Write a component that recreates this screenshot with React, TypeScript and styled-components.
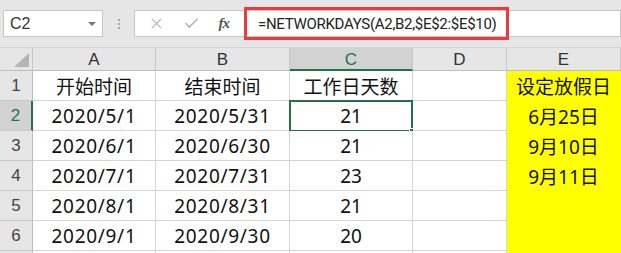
import styled, { createGlobalStyle } from 'styled-components';
import { X, Check } from 'lucide-react';

const GlobalStyle = createGlobalStyle`
  html, body {
    margin: 0;
    padding: 0;
    background: #ffffff;
    overflow: hidden;
  }
`;

const GREEN = '#217346';

const StRoot = styled.div`
  width: 621px;
  height: 253px;
  overflow: hidden;
  font-family: 'Liberation Sans', Arial, sans-serif;
`;

const StFormulaBar = styled.div`
  display: flex;
  align-items: center;
  height: 47px;
  background: #e6e6e6;
  box-sizing: border-box;
  padding-left: 3px;
`;

const StNameBox = styled.div`
  width: 100px;
  height: 27px;
  box-sizing: border-box;
  background: #fff;
  border: 1px solid #c6c6c6;
  display: flex;
  align-items: center;
  justify-content: space-between;
  padding: 0 6px 0 6px;
  font-size: 16px;
  color: #333;
`;

const StCaret = styled.span`
  width: 0;
  height: 0;
  border-left: 4px solid transparent;
  border-right: 4px solid transparent;
  border-top: 4px solid #777;
`;

const StGrip = styled.div`
  width: 31px;
  display: flex;
  flex-direction: column;
  align-items: center;
  gap: 2px;

  span {
    width: 2px;
    height: 2px;
    background: #a8a8a8;
  }
`;

const StButtons = styled.div`
  width: 110px;
  height: 27px;
  box-sizing: border-box;
  background: #fff;
  border: 1px solid #c6c6c6;
  border-right: none;
  display: flex;
  align-items: center;
  justify-content: space-around;
  padding: 0 6px 0 4px;
  color: #b8b8b8;
`;

const StFx = styled.span`
  font-family: 'Liberation Serif', 'Times New Roman', serif;
  font-style: italic;
  font-weight: bold;
  font-size: 15px;
  color: #555;
  letter-spacing: -1px;
`;

const StInput = styled.div`
  flex: 1;
  height: 27px;
  box-sizing: border-box;
  background: #fff;
  border: 1px solid #c6c6c6;
  position: relative;
  display: flex;
  align-items: center;
  padding-left: 13px;
  font-family: Roboto, 'Liberation Sans', sans-serif;
  font-size: 15px;
  color: #222;
  letter-spacing: -0.3px;
`;

const StMark = styled.span`
  position: absolute;
  top: -4px;
  bottom: -4px;
  left: -1px;
  width: 265px;
  box-sizing: border-box;
  border: 3px solid #f0393c;
`;

const StSheet = styled.div`
  display: grid;
  grid-template-columns: 33px 123px 134px 123px 94px 1fr;
  grid-template-rows: 24px repeat(7, 30px);
`;

const StCorner = styled.div`
  background: #e6e6e6;
  border-right: 1px solid #c8c8c8;
  border-bottom: 1px solid #bdbdbd;
  border-top: 1px solid #d6d6d6;
  box-sizing: border-box;
  display: flex;
  align-items: flex-end;
  justify-content: flex-end;
  padding: 0 3px 3px 0;
`;

const StColHead = styled.div<{ $active?: boolean }>`
  box-sizing: border-box;
  background: ${(p) => (p.$active ? '#d2d2d2' : '#e6e6e6')};
  border-top: 1px solid #d6d6d6;
  border-right: 1px solid #c8c8c8;
  border-bottom: ${(p) => (p.$active ? `2px solid ${GREEN}` : '1px solid #bdbdbd')};
  display: flex;
  align-items: center;
  justify-content: center;
  padding-top: 2px;
  font-size: 17px;
  color: ${(p) => (p.$active ? GREEN : '#333')};
`;

const StRowHead = styled.div<{ $active?: boolean }>`
  box-sizing: border-box;
  background: ${(p) => (p.$active ? '#d2d2d2' : '#e6e6e6')};
  border-right: ${(p) => (p.$active ? `2px solid ${GREEN}` : '1px solid #bdbdbd')};
  border-bottom: 1px solid #c8c8c8;
  display: flex;
  align-items: center;
  justify-content: center;
  font-size: 17px;
  color: ${(p) => (p.$active ? GREEN : '#444')};
`;

const StCell = styled.div<{ $fill?: string; $spaced?: boolean }>`
  position: relative;
  box-sizing: border-box;
  background: ${(p) => p.$fill || '#fff'};
  border-right: 1px solid ${(p) => p.$fill || '#d4d4d4'};
  border-bottom: 1px solid ${(p) => p.$fill || '#d4d4d4'};
  display: flex;
  align-items: center;
  justify-content: center;
  font-family: 'Noto Sans', 'Noto Sans CJK SC', sans-serif;
  font-size: 19px;
  color: #111;
  letter-spacing: ${(p) => (p.$spaced ? '0.7px' : '0')};
  padding-top: 1px;
`;

const StSelection = styled.div`
  position: absolute;
  top: -1px;
  left: -1px;
  right: -1px;
  bottom: -2px;
  border: 2px solid ${GREEN};
  pointer-events: none;
`;

const StHandle = styled.span`
  position: absolute;
  right: -5px;
  bottom: -5px;
  width: 5px;
  height: 5px;
  background: ${GREEN};
  border: 1px solid #fff;
`;

const YELLOW = '#ffff00';

const columns = ['A', 'B', 'C', 'D', 'E'];

const rows: string[][] = [
  ['开始时间', '结束时间', '工作日天数', '', '设定放假日'],
  ['2020/5/1', '2020/5/31', '21', '', '6月25日'],
  ['2020/6/1', '2020/6/30', '21', '', '9月10日'],
  ['2020/7/1', '2020/7/31', '23', '', '9月11日'],
  ['2020/8/1', '2020/8/31', '21', '', ''],
  ['2020/9/1', '2020/9/30', '20', '', ''],
];

const App = () => (
  <StRoot>
    <GlobalStyle />
    <StFormulaBar>
      <StNameBox>
        C2
        <StCaret />
      </StNameBox>
      <StGrip>
        <span />
        <span />
        <span />
      </StGrip>
      <StButtons>
        <X size={17} strokeWidth={1.6} />
        <Check size={17} strokeWidth={2.4} />
        <StFx>fx</StFx>
      </StButtons>
      <StInput>
        =NETWORKDAYS(A2,B2,$E$2:$E$10)
        <StMark />
      </StInput>
    </StFormulaBar>

    <StSheet>
      <StCorner>
        <svg width="15" height="14" viewBox="0 0 15 14">
          <polygon points="15,0 15,14 0,14" fill="#b4b4b4" />
        </svg>
      </StCorner>
      {columns.map((c) => (
        <StColHead key={c} $active={c === 'C'}>
          {c}
        </StColHead>
      ))}

      {rows.map((row, r) => [
        <StRowHead key={`h${r}`} $active={r === 1}>
          {r + 1}
        </StRowHead>,
        ...row.map((v, c) => (
          <StCell
            key={`${r}-${c}`}
            $fill={c === 4 ? YELLOW : undefined}
            $spaced={r > 0 && c < 2}
          >
            {v}
            {r === 1 && c === 2 && (
              <StSelection>
                <StHandle />
              </StSelection>
            )}
          </StCell>
        )),
      ])}

      {/* next row only peeks in at the bottom edge */}
      <StRowHead />
      {columns.map((c) => (
        <StCell key={`7-${c}`} $fill={c === 'E' ? YELLOW : undefined} />
      ))}
    </StSheet>
  </StRoot>
);

export default App;
